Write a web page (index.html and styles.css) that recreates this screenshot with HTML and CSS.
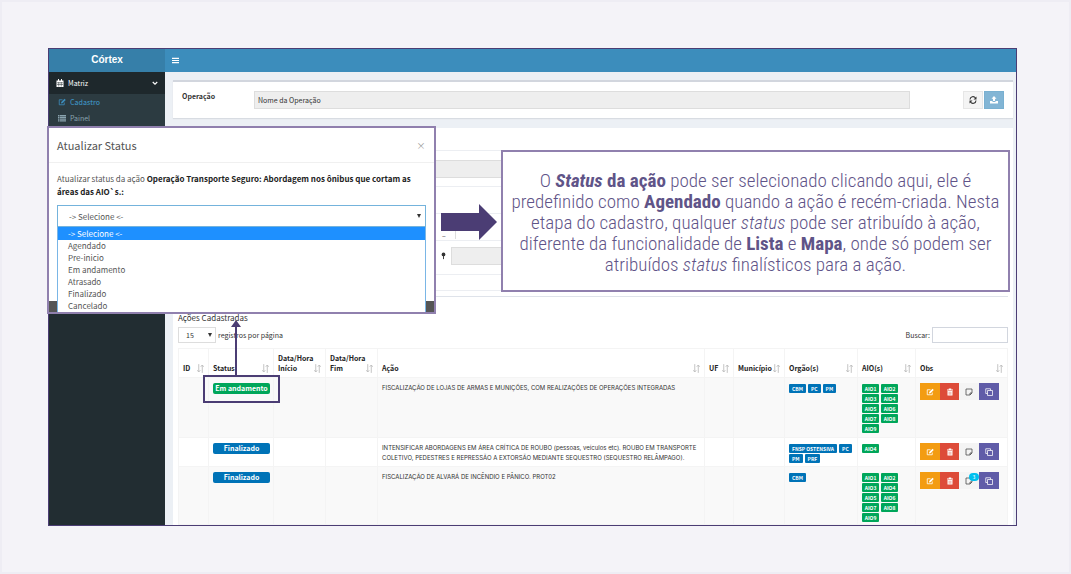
FILE: index.html
```html
<!DOCTYPE html>
<html lang="pt-BR">
<head>
<meta charset="utf-8">
<title>Córtex</title>
<meta name="viewport" content="width=device-width, initial-scale=1">
<link rel="stylesheet" href="styles.css">
</head>
<body>
<svg class="sprite" aria-hidden="true">
  <symbol id="edit" viewBox="0 0 16 16"><path d="M12.500 9v4.500H2.500v-10H9" fill="none" stroke="currentColor" stroke-width="1.600"/><path d="M6 11l.5-3L13 1.500 15.500 4 9 10.500z" fill="currentColor"/></symbol>
  <symbol id="trash" viewBox="0 0 16 16"><path d="M5.500 3V1h5v2H14v2H2V3zM3 6h10v9H3z" fill="currentColor"/><path d="M6 7.500v6M8 7.500v6M10 7.500v6" stroke="#dd4b39" stroke-width=".8"/></symbol>
  <symbol id="note" viewBox="0 0 16 16"><path d="M2 2h12v8l-4 4H2zM14 10h-4v4" fill="none" stroke="currentColor" stroke-width="1.500"/></symbol>
  <symbol id="copy" viewBox="0 0 16 16"><path d="M5 5h10v10H5zM5 11H1.500V1.500H11V5" fill="none" stroke="currentColor" stroke-width="1.500" stroke-linejoin="round"/></symbol>
  <symbol id="sort" viewBox="0 0 8 10"><path d="M2 0v9M.3 7L2 9l1.700-2M6 10V1M4.300 3L6 1l1.700 2" fill="none" stroke="currentColor" stroke-width="1"/></symbol>
</svg>
<main class="frame">
  <header class="topbar">
    <a class="brand" href="#">Córtex</a>
    <button class="burger" type="button" aria-label="Menu"><svg viewBox="0 0 8 8"><path d="M0 1.500h8M0 4h8M0 6.500h8" stroke="currentColor" stroke-width="1.300"/></svg></button>
  </header>
  <div class="shell">
    <nav class="sidebar">
      <a class="menu-head" href="#"><svg class="ico" viewBox="0 0 16 16"><path d="M1 3h14v13H1zM4 0h2v4H4zM10 0h2v4h-2z" fill="currentColor"/><path d="M2 7.500h12M2 11h12M5.500 6v9M10.500 6v9" stroke="#1e282c"/></svg><span>Matriz</span><svg class="chev" viewBox="0 0 8 6"><path d="M1 1l3 3 3-3" fill="none" stroke="currentColor" stroke-width="1.500"/></svg></a>
      <div class="submenu">
        <a class="sub active" href="#"><svg class="ico"><use href="#edit"/></svg>Cadastro</a>
        <a class="sub" href="#"><svg class="ico" viewBox="0 0 16 16"><path d="M0 3h3M0 6.500h3M0 10h3M0 13.500h3M4 3h12M4 6.500h12M4 10h12M4 13.500h12" stroke="currentColor" stroke-width="2.500"/></svg>Painel</a>
      </div>
    </nav>
    <div class="content">
      <section class="box operation">
        <label for="op">Operação</label>
        <input id="op" class="op-input" value="Nome da Operação" readonly>
        <div class="op-actions">
          <button class="btn refresh" type="button" aria-label="Recarregar"><svg viewBox="0 0 16 16"><path d="M2 7a6 6 0 0 1 11-3M14 9a6 6 0 0 1-11 3" fill="none" stroke="currentColor" stroke-width="2.200"/><path d="M15 1v6H9zM1 15V9h6z" fill="currentColor"/></svg></button>
          <button class="btn upload" type="button" aria-label="Enviar"><svg viewBox="0 0 16 16"><path d="M8 0l5 5.500h-3V10H6V5.500H3zM0 10h5v2h6v-2h5v5H0z" fill="currentColor"/></svg></button>
        </div>
      </section>
      <section class="box records">
        <div class="form">
          <div class="form-row first"><div class="field"></div></div>
          <div class="form-row editor"><div class="tools">–</div></div>
          <div class="form-row place"><span class="pin"><svg viewBox="0 0 8 12"><circle cx="4" cy="3.500" r="3" fill="currentColor"/><path d="M4 5v6" stroke="currentColor" stroke-width="1.500"/></svg></span><div class="field"></div></div>
          <div class="form-row last"></div>
        </div>
        <h2>Ações Cadastradas</h2>
        <div class="controls">
          <span class="length"><select id="len" class="len"><option>15</option></select><label for="len">registros por página</label></span>
          <span class="search"><label for="q">Buscar:</label><input id="q" type="search"></span>
        </div>
        <table>
          <colgroup><col class="c-id"><col class="c-status"><col class="c-start"><col class="c-end"><col><col class="c-uf"><col class="c-city"><col class="c-org"><col class="c-aio"><col class="c-obs"></colgroup>
          <thead><tr>
            <th><div>ID<svg><use href="#sort"/></svg></div></th>
            <th><div>Status<svg><use href="#sort"/></svg></div></th>
            <th><div>Data/Hora<br>Início<svg><use href="#sort"/></svg></div></th>
            <th><div>Data/Hora<br>Fim<svg><use href="#sort"/></svg></div></th>
            <th><div>Ação<svg><use href="#sort"/></svg></div></th>
            <th><div>UF<svg><use href="#sort"/></svg></div></th>
            <th><div>Município<svg><use href="#sort"/></svg></div></th>
            <th><div>Orgão(s)<svg><use href="#sort"/></svg></div></th>
            <th><div>AIO(s)<svg><use href="#sort"/></svg></div></th>
            <th><div>Obs<svg><use href="#sort"/></svg></div></th>
          </tr></thead>
          <tbody>
            <tr>
              <td></td><td><span class="status green">Em andamento</span></td><td></td><td></td>
              <td class="desc">FISCALIZAÇÃO DE LOJAS DE ARMAS E MUNIÇÕES, COM REALIZAÇÕES DE OPERAÇÕES INTEGRADAS</td><td></td><td></td>
              <td><div class="tags blue"><b>CBM</b><b>PC</b><b>PM</b></div></td>
              <td><div class="tags aio"><b>AIO1</b><b>AIO2</b><b>AIO3</b><b>AIO4</b><b>AIO5</b><b>AIO6</b><b>AIO7</b><b>AIO8</b><b>AIO9</b></div></td>
              <td><div class="acts"><button class="a-edit" aria-label="Editar"><svg><use href="#edit"/></svg></button><button class="a-del" aria-label="Excluir"><svg><use href="#trash"/></svg></button><button class="a-note" aria-label="Notas"><svg><use href="#note"/></svg></button><button class="a-copy" aria-label="Copiar"><svg><use href="#copy"/></svg></button></div></td>
            </tr>
            <tr>
              <td></td><td><span class="status">Finalizado</span></td><td></td><td></td>
              <td class="desc">INTENSIFICAR ABORDAGENS EM ÁREA CRÍTICA DE ROUBO (pessoas, veículos etc). ROUBO EM TRANSPORTE<br>COLETIVO, PEDESTRES E REPRESSÃO A EXTORSÃO MEDIANTE SEQUESTRO (SEQUESTRO RELÂMPAGO).</td><td></td><td></td>
              <td><div class="tags blue"><b>FNSP OSTENSIVA</b><b>PC</b><b>PM</b><b>PRF</b></div></td>
              <td><div class="tags aio"><b>AIO4</b></div></td>
              <td><div class="acts"><button class="a-edit" aria-label="Editar"><svg><use href="#edit"/></svg></button><button class="a-del" aria-label="Excluir"><svg><use href="#trash"/></svg></button><button class="a-note" aria-label="Notas"><svg><use href="#note"/></svg></button><button class="a-copy" aria-label="Copiar"><svg><use href="#copy"/></svg></button></div></td>
            </tr>
            <tr>
              <td></td><td><span class="status">Finalizado</span></td><td></td><td></td>
              <td class="desc">FISCALIZAÇÃO DE ALVARÁ DE INCÊNDIO E PÂNICO. PROT02</td><td></td><td></td>
              <td><div class="tags blue"><b>CBM</b></div></td>
              <td><div class="tags aio"><b>AIO1</b><b>AIO2</b><b>AIO3</b><b>AIO4</b><b>AIO5</b><b>AIO6</b><b>AIO7</b><b>AIO8</b><b>AIO9</b></div></td>
              <td><div class="acts"><button class="a-edit" aria-label="Editar"><svg><use href="#edit"/></svg></button><button class="a-del" aria-label="Excluir"><svg><use href="#trash"/></svg></button><button class="a-note" aria-label="Notas"><svg><use href="#note"/></svg><span class="count">3</span></button><button class="a-copy" aria-label="Copiar"><svg><use href="#copy"/></svg></button></div></td>
            </tr>
          </tbody>
        </table>
      </section>
    </div>
  </div>

  <div class="modal" role="dialog" aria-labelledby="mt">
    <div class="modal-head"><h1 id="mt">Atualizar Status</h1><button type="button" class="close" aria-label="Fechar">×</button></div>
    <div class="modal-body">
      <label for="st">Atualizar status da ação <b>Operação Transporte Seguro: Abordagem nos ônibus que cortam as<br>áreas das AIO`s.:</b></label>
      <select id="st" class="st"><option>-&gt; Selecione &lt;-</option></select>
    </div>
    <div class="modal-foot">
      <ul class="options" role="listbox" aria-label="Status">
        <li role="option" aria-selected="true">-&gt; Selecione &lt;-</li><li role="option">Agendado</li><li role="option">Pre-inicio</li><li role="option">Em andamento</li><li role="option">Atrasado</li><li role="option">Finalizado</li><li role="option">Cancelado</li>
      </ul>
    </div>
  </div>

  <svg class="arrow-right" viewBox="0 0 56 36"><path d="M0 9h38V0l18 18-18 18v-9H0z" fill="#4b3d74"/></svg>
  <svg class="arrow-up" viewBox="0 0 10 56"><path d="M5 0l5 7H6v49H4V7H0z" fill="#4b3d74"/></svg>
  <div class="marker"></div>
  <p class="callout">O <b><i>Status</i> da ação</b> pode ser selecionado clicando aqui, ele é<br>predefinido como <b>Agendado</b> quando a ação é recém-criada. Nesta<br>etapa do cadastro, qualquer <i>status</i> pode ser atribuído à ação,<br>diferente da funcionalidade de <b>Lista</b> e <b>Mapa</b>, onde só podem ser<br>atribuídos <i>status</i> finalísticos para a ação.</p>
</main>
</body>
</html>
```
FILE: styles.css
```css
* { box-sizing: border-box; }
body {
  margin: 0;
  min-height: 100vh;
  padding: 46px 52px 46px 46px;
  border: 2px solid #eeedf4;
  background: #f4f3f8;
  color: #333;
  font: 7px/10px "Noto Sans CJK SC", "Open Sans", sans-serif;
}
button, input, select { font: inherit; color: inherit; margin: 0; padding: 0; border: 0; border-radius: 0; appearance: none; }
button { display: flex; align-items: center; justify-content: center; }
a { color: inherit; text-decoration: none; }
b { font-weight: 700; }
h1, h2, p, ul { margin: 0; padding: 0; font-weight: 400; }
.sprite { position: absolute; width: 0; height: 0; }
.frame { position: relative; border: 1px solid #4b3d74; background: #ecf0f5; }

.topbar { display: flex; height: 23px; background: #3c8dbc; color: #fff; }
.brand { width: 116px; background: #367fa9; text-align: center; font: bold 10px/21px "Liberation Sans", Arial, sans-serif; }
.burger { width: 21px; background: none; }
.burger svg { width: 7px; height: 7px; }
.shell { display: flex; }
.sidebar { width: 116px; flex: none; background: #222d32; }
.menu-head { display: flex; align-items: center; gap: 4px; height: 22px; padding: 0 7px; background: #1e282c; color: #fff; }
.menu-head span { flex: 1; }
.ico { width: 8px; height: 8px; }
.chev { width: 6px; height: 5px; }
.submenu { height: 60px; background: #2c3b41; color: #8aa4af; }
.sub { display: flex; align-items: center; gap: 4px; height: 16px; padding: 0 9px; }
.sub.active { color: #3c8dbc; font-weight: 500; }

.content { flex: 1; min-width: 0; padding: 8px 3px 0 8px; }
.box { background: #fff; }
.operation { display: flex; height: 38px; padding: 9px 9px 0; border-top: 2px solid #d2d6de; box-shadow: 0 1px 1px #d8dce2; }
.operation label { width: 72px; font-weight: 700; }
.op-input { flex: 1; min-width: 0; height: 18px; padding: 0 3px; border: 1px solid #ddd; background: #eee; }
.op-actions { display: flex; gap: 1px; margin-left: 53px; }
.btn { width: 20px; height: 18px; border: 1px solid #e6e6e6; background: #f4f4f4; }
.btn svg { width: 8px; height: 8px; }
.upload { border-color: #79b0d1; background: #82b5d5; color: #fff; }

.records { margin-top: 10px; padding: 22px 5px 0; }
.form { border-bottom: 1px solid #dfe3ea; height: 147px; }
.form-row { border: 1px solid #eceef2; }
.first { height: 37px; padding: 9px 0; }
.field { flex: 1; height: 18px; border: 1px solid #ddd; background: #eee; }
.editor { height: 28px; margin-top: 26px; padding: 16px 0 0 263px; }
.tools { width: 14px; height: 9px; border-right: 1px solid #ddd; }
.place { display: flex; height: 28px; margin-top: 6px; border-top: 0; padding-left: 257px; }
.pin { width: 15px; height: 18px; padding: 5px; }
.pin svg { display: block; width: 5px; height: 8px; }
.last { height: 16px; border-top: 0; }
h2 { padding: 14px 0 2px; font-size: 8px; line-height: 14px; }
.controls { display: flex; justify-content: space-between; align-items: center; margin-bottom: 5px; }
.length, .search { display: flex; align-items: center; gap: 2px; }
.len { width: 38px; height: 16px; padding-left: 7px; border: 1px solid #ddd; background: #fff url("data:image/svg+xml,%3Csvg xmlns='http://www.w3.org/2000/svg' viewBox='0 0 4 4'%3E%3Cpath d='M0 0h4L2 4z' fill='%23333'/%3E%3C/svg%3E") no-repeat right 3px center / 4px 4px; }
.search input { width: 76px; height: 16px; border: 1px solid #d2d6de; background: #fff; }

table { width: 100%; table-layout: fixed; border-collapse: collapse; }
.c-id { width: 30px; } .c-status { width: 65px; } .c-start { width: 52px; } .c-end { width: 52px; }
.c-uf { width: 29px; } .c-city { width: 51px; } .c-org { width: 73px; } .c-aio { width: 58px; } .c-obs { width: 92px; }
th, td { padding: 0 0 0 4px; border: 1px solid #f4f4f4; text-align: left; vertical-align: top; white-space: nowrap; }
th { height: 29px; padding-bottom: 4px; vertical-align: bottom; color: #222; }
th div { position: relative; }
th svg { position: absolute; right: 4px; bottom: 0; width: 7px; height: 9px; color: #bbb; }
td { padding-top: 5px; padding-bottom: 3px; }
tbody tr:first-child td { padding-bottom: 4px; }
tbody tr:last-child td { padding-bottom: 2px; }
tbody tr:nth-child(odd) { background: #f9f9f9; }
.desc { font-family: Inter, "Open Sans", sans-serif; font-size: 6px; }
.status { display: block; width: 57px; border-radius: 2px; background: #0073b7; color: #fff; text-align: center; font-weight: 700; line-height: 11px; }
.status.green, .aio b { background: #00a65a; }
.tags { display: flex; flex-wrap: wrap; gap: 1px 2px; padding-top: 1px; color: #fff; font-size: 5px; line-height: 9px; }
.tags b { padding: 0 3px; border-radius: 1px; background: #0073b7; }
.tags.aio { padding-right: 14px; }
.tags.aio b { width: 17px; padding: 0; text-align: center; background: #00a65a; }
.acts { display: flex; }
.acts button { position: relative; width: 20px; height: 17px; color: #fff; }
.acts svg { width: 8px; height: 8px; }
.a-edit { background: #f39c12; }
.acts .a-del { width: 19px; background: #dd4b39; }
.acts .a-note { background: #f4f4f4; color: #444; }
.a-copy { background: #605ca8; }
.count { position: absolute; top: 1px; right: 0; width: 10px; border-radius: 4px; background: #00c0ef; color: #fff; font-size: 5px; line-height: 8px; text-align: center; }

.modal { position: absolute; left: -2px; top: 77px; width: 389px; border: 2px solid #9080ae; background: #fff; color: #555; font-size: 8px; line-height: 13px; }
.modal-head { display: flex; justify-content: space-between; align-items: center; height: 35px; padding: 0 8px; border-bottom: 1px solid #f0f0f0; }
h1 { font-size: 11px; line-height: 16px; }
.close { width: 10px; height: 12px; background: none; color: #999; font-size: 9px; }
.modal-body { padding: 9px 8px 0; }
.modal-body label { display: block; margin-bottom: 7px; }
.modal-body b { color: #222; }
.st { display: block; width: 100%; height: 22px; padding-left: 11px; border: 1px solid #74b3dc; background: #fff url("data:image/svg+xml,%3Csvg xmlns='http://www.w3.org/2000/svg' viewBox='0 0 4 4'%3E%3Cpath d='M0 0h4L2 4z' fill='%23333'/%3E%3C/svg%3E") no-repeat right 4px center / 4px 4px; }
.modal-foot { padding: 0 8px; background: linear-gradient(#fff 74px, #555 74px); }
.options { height: 85px; overflow: hidden; border: solid #7ab6e6; border-width: 0 1px; background: #fff; list-style: none; line-height: 12px; }
.options li { padding-left: 10px; }
.options li[aria-selected] { background: #1e90ff; color: #fff; line-height: 13px; }

.arrow-right { position: absolute; left: 392px; top: 155px; width: 56px; height: 36px; }
.arrow-up { position: absolute; left: 182px; top: 271px; width: 10px; height: 56px; }
.marker { position: absolute; left: 154px; top: 326px; width: 77px; height: 28px; border: 2px solid #4b3d74; }
.callout { position: absolute; left: 452px; right: 6px; top: 101px; padding: 18px 0 15px; border: 2px solid #9080ae; background: #fff; color: #5f5488; text-align: center; white-space: nowrap; font: 300 19px/21px "Roboto Condensed", "Liberation Sans Narrow", Roboto, sans-serif; }
```
